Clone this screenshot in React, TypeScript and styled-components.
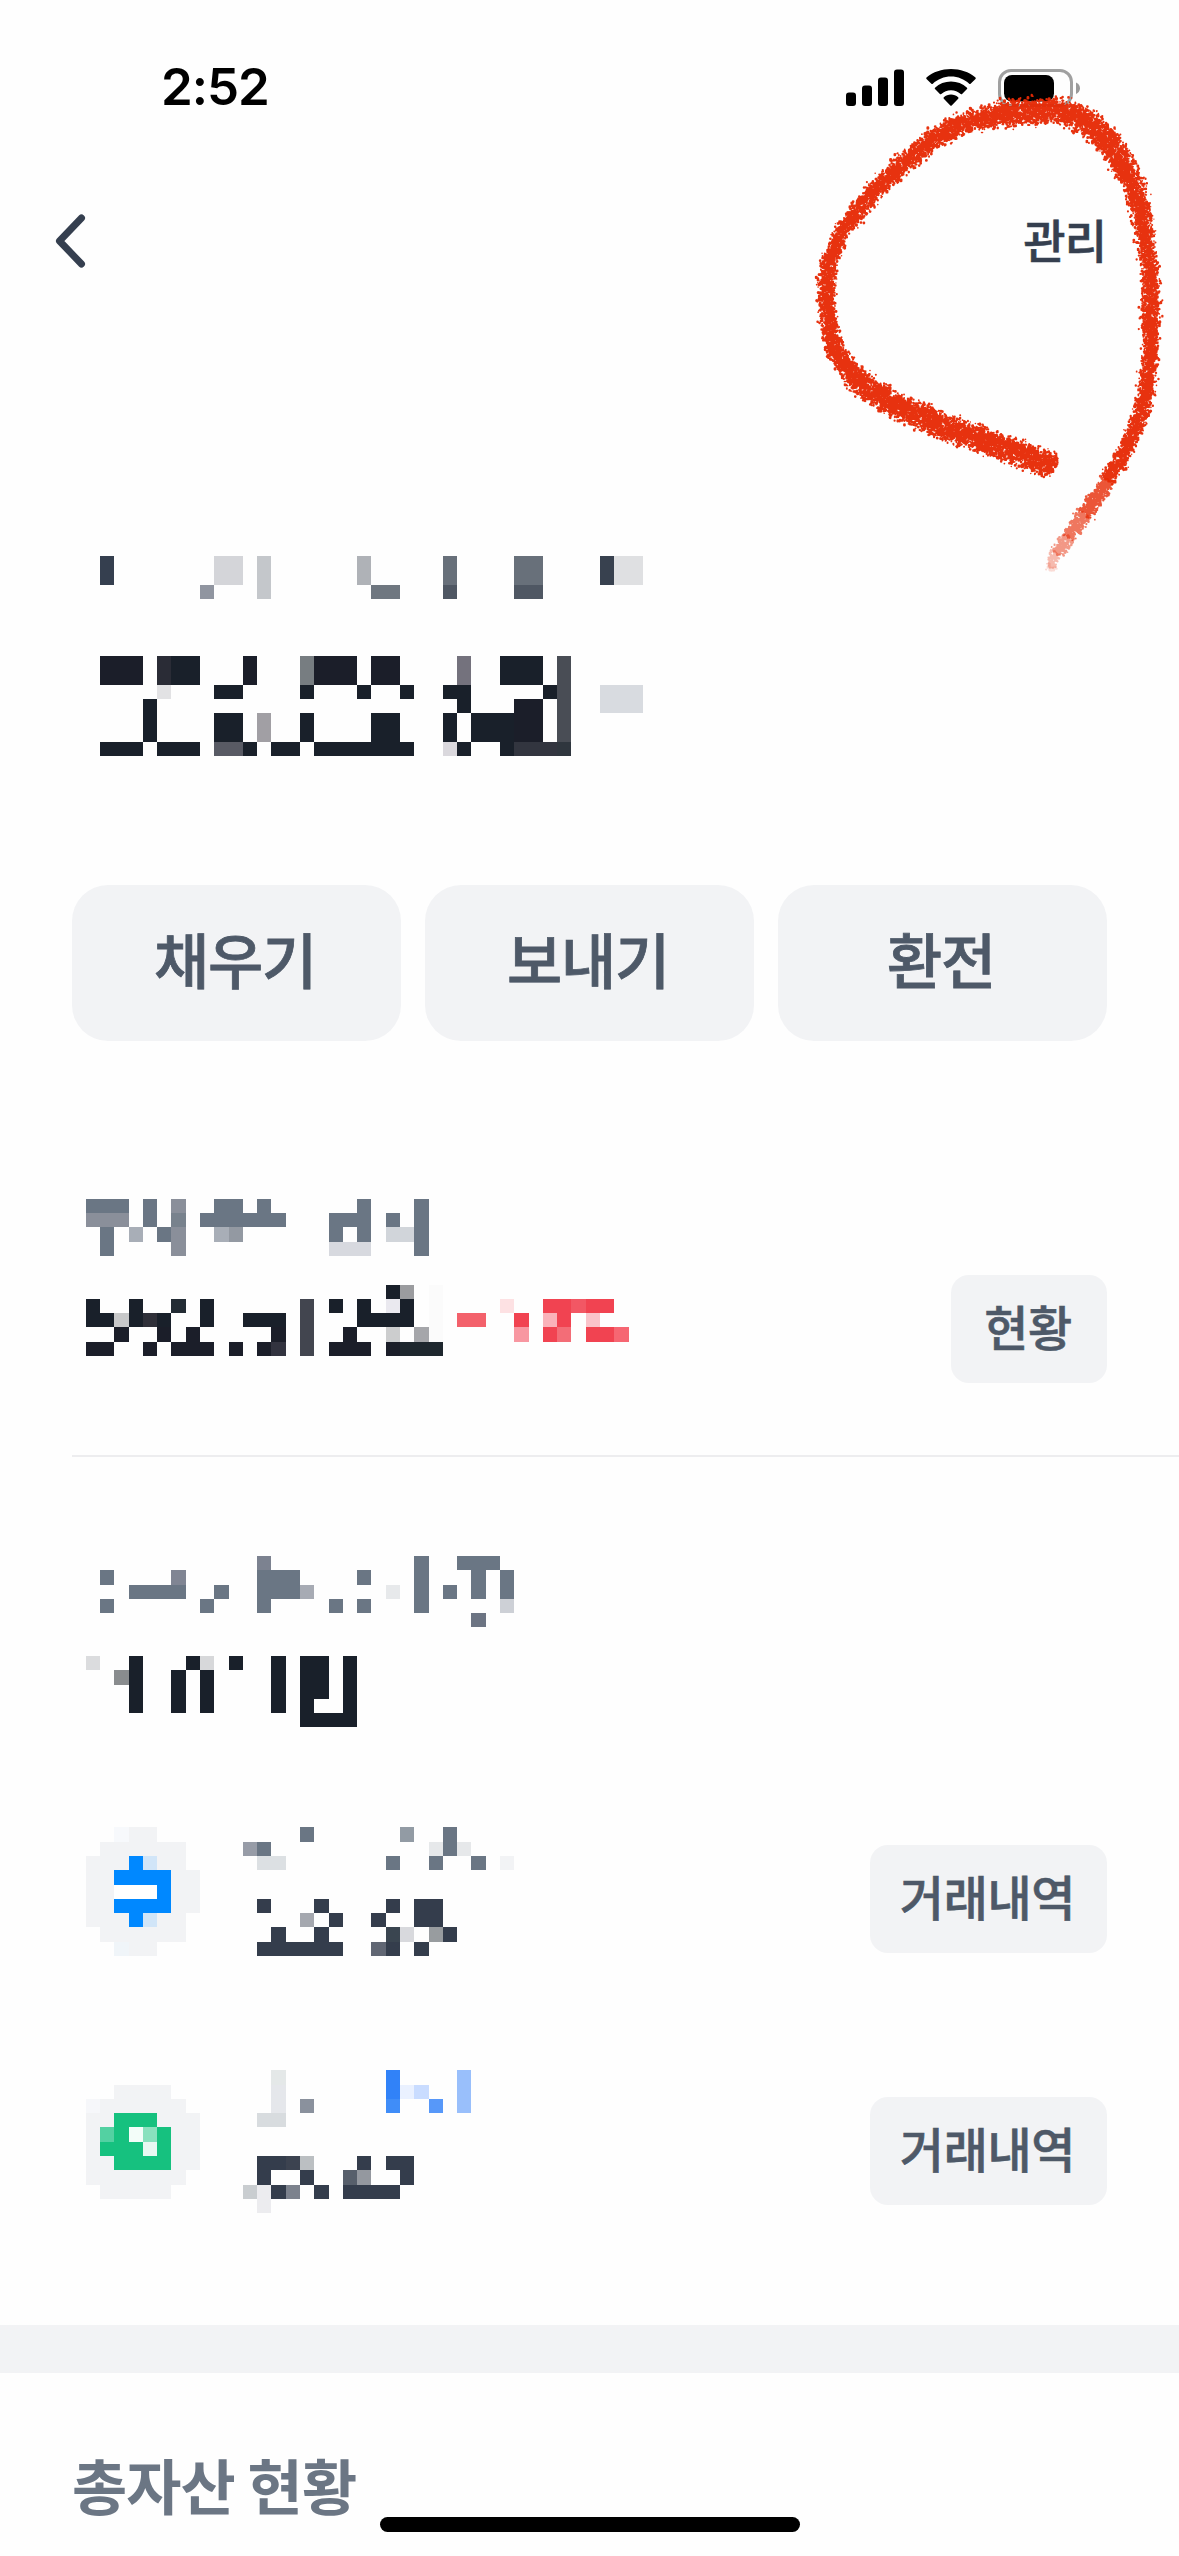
import React from 'react';
import styled, { createGlobalStyle } from 'styled-components';

const GlobalStyle = createGlobalStyle`
  * { box-sizing: border-box; }
  html, body { margin: 0; padding: 0; background: #fefefe; }
  body { font-family: "Noto Sans CJK KR", "Noto Sans", sans-serif; }
`;

const Screen = styled.div`
  position: relative;
  display: flex;
  flex-direction: column;
  width: 1179px;
  height: 2556px;
  overflow: hidden;
  background: #fefefe;
`;

const StatusBar = styled.header`
  display: flex;
  align-items: center;
  justify-content: space-between;
  height: 176px;
  padding: 0 98px 0 161px;
`;

const Clock = styled.time`
  padding-bottom: 3px;
  font-family: Inter, sans-serif;
  font-size: 51px;
  font-weight: 600;
  line-height: 1;
  letter-spacing: -1px;
  color: #000;
`;

const StatusIcons = styled.div`
  display: flex;
  align-items: center;
  gap: 22px;
`;

const NavBar = styled.nav`
  display: flex;
  align-items: center;
  justify-content: space-between;
  height: 129px;
  padding: 0 73px 0 52px;
`;

const BackButton = styled.button`
  display: flex;
  padding: 0;
  border: 0;
  background: none;
`;

const ManageButton = styled.button`
  padding: 0 0 5px;
  border: 0;
  background: none;
  font-family: inherit;
  font-size: 46px;
  font-weight: 500;
  line-height: 1;
  letter-spacing: -1px;
  color: #353f4f;
  -webkit-text-stroke: 0.6px #353f4f;
`;

const Account = styled.section`
  padding: 251px 72px 0 100px;
`;

const Actions = styled.div`
  display: grid;
  grid-template-columns: repeat(3, 1fr);
  gap: 24px;
  margin-top: 129px;
  padding: 0 72px;
`;

const ActionButton = styled.button`
  height: 156px;
  padding: 0 3px 10px 0;
  border: 0;
  border-radius: 36px;
  background: #f2f3f5;
  font-family: inherit;
  font-size: 60px;
  font-weight: 500;
  letter-spacing: -1.2px;
  line-height: 1;
  color: #4e5968;
  -webkit-text-stroke: 0.8px #4e5968;
`;

const Row = styled.div<{ $top: number; $height: number }>`
  display: flex;
  align-items: flex-start;
  justify-content: space-between;
  height: ${(p) => p.$height}px;
  margin-top: ${(p) => p.$top}px;
  padding: 0 72px 0 86px;
`;

const SmallButton = styled.button<{ $width: number; $drop: number }>`
  width: ${(p) => p.$width}px;
  height: 108px;
  margin-top: ${(p) => p.$drop}px;
  padding: 0 2px 9px 0;
  border: 0;
  border-radius: 18px;
  background: #f2f3f5;
  font-family: inherit;
  font-size: 48px;
  font-weight: 500;
  letter-spacing: -0.3px;
  line-height: 1;
  color: #4e5968;
  -webkit-text-stroke: 0.6px #4e5968;
`;

const Divider = styled.hr`
  width: calc(100% - 72px);
  height: 2px;
  margin: 72px 0 0 72px;
  border: 0;
  background: #ededef;
`;

const Band = styled.div`
  height: 48px;
  margin-top: 112px;
  background: #f2f3f5;
`;

const Heading = styled.h2`
  margin: 81px 0 0 72px;
  font-size: 60px;
  font-weight: 700;
  line-height: 60px;
  letter-spacing: -0.9px;
  color: #6b7684;
`;

const HomeIndicator = styled.div`
  position: absolute;
  left: 380px;
  bottom: 24px;
  width: 420px;
  height: 15px;
  border-radius: 8px;
  background: #000;
`;

const Scribble = styled.svg`
  position: absolute;
  top: 80px;
  left: 800px;
  pointer-events: none;
`;

const MosaicSvg = styled.svg`
  display: block;
  flex: none;
`;

/* A run is [row, first column, last column, colour] on the shared privacy grid. */
type Run = [number, number, number, string];

const CELL = 100 / 7;
const colX = (k: number) => Math.round(k * CELL);
const rowY = (k: number) => Math.round(k * CELL - 1.1);

function Mosaic({ runs }: { runs: Run[] }) {
  const x0 = colX(Math.min(...runs.map((r) => r[1])));
  const x1 = colX(Math.max(...runs.map((r) => r[2])) + 1);
  const y0 = rowY(Math.min(...runs.map((r) => r[0])));
  const y1 = rowY(Math.max(...runs.map((r) => r[0])) + 1);
  return (
    <MosaicSvg width={x1 - x0} height={y1 - y0} shapeRendering="crispEdges" aria-hidden="true">
      {runs.map(([r, a, b, fill], i) => (
        <rect
          key={i}
          x={colX(a) - x0}
          y={rowY(r) - y0}
          width={colX(b + 1) - colX(a)}
          height={rowY(r + 1) - rowY(r)}
          fill={fill}
        />
      ))}
    </MosaicSvg>
  );
}

/* Expands "a-b,c" column lists over one or more rows in one colour. */
function cells(rows: number[], cols: string, fill: string): Run[] {
  return rows.flatMap((r) =>
    cols.split(',').map((part): Run => {
      const [a, b] = part.split('-').map(Number);
      return [r, a, b === undefined ? a : b, fill];
    }),
  );
}

const INK = '#19202a';
const INK2 = '#1b1e29';
const SLATE = '#6a7684';
const NAVY = '#343d4c';
const DISC = '#f2f3f5';
const BLUE = '#0088ff';
const GREEN = '#16c17f';
const RED = '#f14351';

const balance: Run[] = [
  ...cells([39, 40], '7', '#353f4f'),
  ...cells([39, 40], '15-16', '#d4d5d9'),
  ...cells([39, 40, 41], '18', '#c4c7cb'),
  ...cells([39, 40], '25', '#afb2b7'),
  ...cells([39, 40], '31,36-37', '#68707a'),
  ...cells([39, 40], '42', '#38414f'),
  ...cells([39, 40], '43-44', '#dfe0e2'),
  ...cells([41], '14', '#9095a0'),
  ...cells([41], '26-27', '#6f7780'),
  ...cells([41], '31,36-37', '#4f5763'),
  ...cells([46, 47], '7-9,17,22-24,26-27', INK2),
  ...cells([46, 47], '11', '#2a2c36'),
  ...cells([46, 47], '12-13,35-37', INK),
  ...cells([46, 47], '21', '#777d81'),
  ...cells([46, 47], '32', '#74727d'),
  ...cells([46, 47, 48, 49, 50, 51], '39', '#494d55'),
  ...cells([48], '11', '#e2e2e4'),
  ...cells([48], '15-16,21,25,28,31-32,38', INK),
  ...cells([48, 49], '42-44', '#d8dbe0'),
  ...cells([49], '10,32', INK),
  ...cells([49], '36-37', INK2),
  ...cells([50, 51], '10,15-16,21,26-27,31,33-35', INK),
  ...cells([50, 51], '36-37', INK2),
  ...cells([50, 51], '18', '#a19fa4'),
  ...cells([52], '7-9,11-13,17,19-20,22-28,32,35', INK),
  ...cells([52], '15-16', '#585a64'),
  ...cells([52], '31', '#dad8dd'),
  ...cells([52], '36-38', '#32353f'),
  ...cells([52], '39', '#2f363e'),
];

const holding: Run[] = [
  ...cells([84], '6-8,10,15-16,18,25,29', SLATE),
  ...cells([84, 86, 87], '12', '#8a8f9a'),
  ...cells([85], '6-8', '#8a8f9a'),
  ...cells([85], '12', '#78828d'),
  ...cells([85], '10,14-19,23-25,27,29', SLATE),
  ...cells([86], '7,11,23,25,29', SLATE),
  ...cells([86], '9,15', '#a8aeb7'),
  ...cells([86], '16', '#9399a2'),
  ...cells([86], '27-28', '#d1d5da'),
  ...cells([87], '7,29', SLATE),
  ...cells([87], '23-25', '#d7d9df'),
  ...cells([90], '27', INK),
  ...cells([90], '28', '#9b9c9f'),
  ...cells([90, 91, 92, 93], '30', '#fbfbfb'),
  ...cells([91], '6,9,14,23,25,28', INK),
  ...cells([91], '12', '#232c34'),
  ...cells([91, 92, 93, 94], '21', '#42454f'),
  ...cells([91], '27', '#eae9ef'),
  ...cells([91], '35', '#fde1e3'),
  ...cells([91], '38-39,41-42', RED),
  ...cells([91], '40', '#f25764'),
  ...cells([92], '6-7,9,11,14,17-19,25-28', INK),
  ...cells([92], '8', '#c7c8c9'),
  ...cells([92], '10', '#2f3039'),
  ...cells([92], '32-33', '#f3616b'),
  ...cells([92], '36,39', RED),
  ...cells([92], '38', '#fab2b9'),
  ...cells([92], '41', '#fac3ca'),
  ...cells([93], '8,11,13,19,24', INK2),
  ...cells([93], '27', '#cccdce'),
  ...cells([93], '29', '#a5a6aa'),
  ...cells([93], '36', '#f897a1'),
  ...cells([93], '38,41-42', RED),
  ...cells([93], '39', '#f36d77'),
  ...cells([93], '43', '#f66672'),
  ...cells([94], '6-7,10,12-14,16,18,23-25,27', INK2),
  ...cells([94], '19', '#32333f'),
  ...cells([94], '28-30', '#1e272e'),
];

const deposit: Run[] = [
  ...cells([109], '18', '#7c8290'),
  ...cells([109], '29,32-34', SLATE),
  ...cells([110], '7,18-20,25,29,33,35', SLATE),
  ...cells([110], '12', '#808593'),
  ...cells([111], '9-12,15,18-20,29,31,33,35', SLATE),
  ...cells([111], '21', '#a7abb4'),
  ...cells([111], '27', '#e7e9eb'),
  ...cells([112], '7,14,18,23,25,29', SLATE),
  ...cells([112], '35', '#cdd0d6'),
  ...cells([113], '33', '#6c7483'),
  ...cells([116], '6', '#dbdcde'),
  ...cells([116], '9,13,16,19,21-22,24', INK),
  ...cells([116], '14', '#d7d8da'),
  ...cells([117], '8', '#898c8e'),
  ...cells([117, 118], '9,12,14,19,21-22,24', INK),
  ...cells([119], '9,12,14,19,21,24', INK),
  ...cells([120], '21-24', INK),
];

const dollars: Run[] = [
  ...cells([128], '8', '#f7f9fc'),
  ...cells([128], '9-10', DISC),
  ...cells([128], '21,31', SLATE),
  ...cells([128], '28', '#929ba4'),
  ...cells([129], '7-12', DISC),
  ...cells([129], '17', '#979ca7'),
  ...cells([129], '18,31', SLATE),
  ...cells([129], '30,32', '#e6e8ea'),
  ...cells([130], '6-8,11-12,35', DISC),
  ...cells([130, 134], '9', BLUE),
  ...cells([130, 134], '10', '#d1e5f8'),
  ...cells([130], '18-19', '#dce0e3'),
  ...cells([130], '27,30,33', SLATE),
  ...cells([131, 132, 133], '6-7,12-13', DISC),
  ...cells([131, 133], '8-11', BLUE),
  ...cells([132], '8-10', '#ffffff'),
  ...cells([132], '11', BLUE),
  ...cells([133], '18,22,27,29-30', NAVY),
  ...cells([134], '6-8,11-12', DISC),
  ...cells([134], '21', '#a5a8af'),
  ...cells([134], '23,26,29-30', NAVY),
  ...cells([135], '7-12', DISC),
  ...cells([135], '19,22,31', NAVY),
  ...cells([135], '27', '#3a4550'),
  ...cells([135], '28', '#d8d9dd'),
  ...cells([135], '30', '#989c9f'),
  ...cells([136], '8', '#f0f5f9'),
  ...cells([136], '9-10', DISC),
  ...cells([136], '18-23,27,29', NAVY),
  ...cells([136], '26', '#606673'),
];

const shares: Run[] = [
  ...cells([145], '19', '#e4e8e8'),
  ...cells([145, 146], '27', '#3182f8'),
  ...cells([145, 146, 147], '32', '#99bffb'),
  ...cells([146], '8-11', DISC),
  ...cells([146, 147], '19', '#e5e7eb'),
  ...cells([146], '28', '#eaf1ff'),
  ...cells([146], '29', '#c9dcff'),
  ...cells([147], '6', '#f6f7fa'),
  ...cells([147], '7-12', DISC),
  ...cells([147], '21', '#8a919d'),
  ...cells([147], '27', '#408df8'),
  ...cells([147], '30', '#5798f9'),
  ...cells([148], '6-7,11-13', DISC),
  ...cells([148], '8-10', GREEN),
  ...cells([148], '18-19', '#d8dcdf'),
  ...cells([149], '6,12-13', DISC),
  ...cells([149], '7', '#53d1a2'),
  ...cells([149], '8,11', GREEN),
  ...cells([149], '9', '#f3fdf9'),
  ...cells([149], '10', '#89e1be'),
  ...cells([150], '6,12-13', DISC),
  ...cells([150], '7-9,11', GREEN),
  ...cells([150], '10', '#e8f8f2'),
  ...cells([151], '6-7,12-13', DISC),
  ...cells([151], '8-11', GREEN),
  ...cells([151], '18-19,25,27-28', NAVY),
  ...cells([151], '20', '#3c4350'),
  ...cells([151], '21', '#bbbfc2'),
  ...cells([152], '6-12', DISC),
  ...cells([152], '18,21,28', NAVY),
  ...cells([152], '24', '#575f6b'),
  ...cells([152], '25', '#94989f'),
  ...cells([153], '7-11', DISC),
  ...cells([153], '17', '#c9cdd0'),
  ...cells([153, 154], '18', '#ececef'),
  ...cells([153], '19,22,24-27', NAVY),
  ...cells([153], '20', '#7c828d'),
];

/* Crayon stroke: centre x, centre y, width, strength. */
type Knot = [number, number, number, number];
const knots: Knot[] = [
  [1055, 467, 26, 1], [1027, 456, 27, 1], [993, 444, 27, 1], [960, 433, 28, 1],
  [923, 418, 27, 1], [890, 402, 26, 1], [863, 385, 25, 1], [845, 366, 22, 1],
  [833, 342, 20, 1], [827, 311, 18, 1], [827, 279, 18, 1], [833, 251, 18, 1],
  [846, 226, 17, 1], [864, 203, 19, 1], [890, 175, 20, 1], [923, 147, 21, 1],
  [957, 127, 23, 1], [987, 117, 23, 1], [1013, 112, 26, 1], [1043, 111, 27, 1],
  [1067, 113, 27, 1], [1090, 123, 27, 1], [1108, 143, 27, 1], [1124, 166, 26, 1],
  [1136, 193, 22, 1], [1143, 225, 20, 1], [1148, 258, 18, 1], [1151, 290, 19, 1],
  [1150, 326, 18, 1], [1150, 354, 18, 1], [1147, 383, 17, 1], [1140, 415, 17, 1],
  [1130, 440, 17, 1], [1115, 469, 16, 0.95], [1097, 497, 16, 0.85], [1080, 521, 16, 0.7],
  [1066, 541, 15, 0.55], [1054, 558, 12, 0.35], [1050, 570, 8, 0.2],
];

function catmull(a: number, b: number, c: number, d: number, t: number) {
  return 0.5 * (2 * b + (c - a) * t + (2 * a - 5 * b + 4 * c - d) * t * t + (3 * b - a - 3 * c + d) * t * t * t);
}

function buildCrayon() {
  let seed = 20417;
  const rnd = () => {
    seed = (seed * 1664525 + 1013904223) % 4294967296;
    return seed / 4294967296;
  };
  const layers = new Map<number, string[]>();
  for (let i = 0; i < knots.length - 1; i++) {
    const p0 = knots[Math.max(0, i - 1)];
    const p1 = knots[i];
    const p2 = knots[i + 1];
    const p3 = knots[Math.min(knots.length - 1, i + 2)];
    const at = (t: number) => [0, 1, 2, 3].map((n) => catmull(p0[n], p1[n], p2[n], p3[n], t));
    const steps = 10;
    for (let s = 0; s < steps; s++) {
      const a = at(s / steps);
      const b = at((s + 1) / steps);
      const dx = b[0] - a[0];
      const dy = b[1] - a[1];
      const len = Math.hypot(dx, dy) || 1;
      const level = Math.max(1, Math.round(a[3] * 6));
      const list = layers.get(level) || [];
      const count = Math.round(len * a[2] * 0.62);
      const wobble = (rnd() - 0.5) * 3;
      for (let n = 0; n < count; n++) {
        const off = wobble + (rnd() + rnd() - 1) * a[2] * 0.3 + (rnd() - 0.5) * a[2] * 0.66;
        const t = rnd();
        const r = 0.7 + rnd() * 0.8;
        const x = a[0] + dx * t - (dy / len) * off + (rnd() - 0.5) * 3;
        const y = a[1] + dy * t + (dx / len) * off + (rnd() - 0.5) * 3;
        list.push(`M${(x - r).toFixed(1)} ${y.toFixed(1)}a${r.toFixed(1)} ${r.toFixed(1)} 0 1 0 ${(2 * r).toFixed(1)} 0a${r.toFixed(1)} ${r.toFixed(1)} 0 1 0 ${(-2 * r).toFixed(1)} 0`);
      }
      layers.set(level, list);
    }
  }
  return [...layers.entries()];
}

const crayon = buildCrayon();

function CrayonLoop() {
  return (
    <Scribble width="379" height="520" viewBox="800 80 379 520" aria-hidden="true">
      {crayon.map(([level, d]) => (
        <path key={level} d={d.join('')} fill="#e62a05" fillRule="nonzero" opacity={(level / 6) * 0.96} />
      ))}
    </Scribble>
  );
}

function Signal() {
  return (
    <svg width="58" height="38" viewBox="0 0 58 38">
      <rect x="0" y="23.5" width="10" height="13.5" rx="3" />
      <rect x="16" y="16.5" width="10" height="20.5" rx="3" />
      <rect x="32" y="8.5" width="10" height="28.5" rx="3" />
      <rect x="48" y="0.5" width="10" height="36.5" rx="3" />
    </svg>
  );
}

function Wifi() {
  return (
    <svg width="50" height="38" viewBox="0 0 50 38">
      <path d="M25 7.6c6.9 0 13.3 2.6 18.2 7.2.4.4 1 .4 1.4 0l4.9-4.9c.4-.4.4-1 0-1.4C42.9 2.9 34.2 0 25 0S7.1 2.9.5 8.5c-.4.4-.4 1 0 1.4l4.900 4.900c.4.4 1 .4 1.400 0C11.700 10.200 18.100 7.600 25 7.600z" />
      <path d="M25 21.200c3.700 0 7.100 1.400 9.700 3.700.4.4 1 .4 1.400 0l4.900-4.800c.4-.4.4-1 0-1.400-4.300-4-9.900-6.200-16-6.200s-11.700 2.200-16 6.200c-.4.4-.4 1 0 1.400l4.900 4.800c.4.4 1 .4 1.400 0 2.600-2.300 6-3.700 9.700-3.700z" />
      <path d="M32.200 29.700c.4-.4.4-1 0-1.400C30.200 26.600 27.700 25.600 25 25.600s-5.200 1-7.200 2.700c-.4.4-.4 1 0 1.400l6.500 6.700c.4.4 1 .4 1.400 0z" />
    </svg>
  );
}

function Battery() {
  return (
    <svg width="83" height="38" viewBox="0 0 83 38">
      <rect x="1.5" y="1.5" width="72" height="35" rx="11.5" fill="none" stroke="#a0a0a0" strokeWidth="3" />
      <rect x="6" y="6" width="50" height="26.5" rx="8" />
      <path d="M78 13.500c2.500 1 4 3.200 4 5.700s-1.500 4.700-4 5.700z" fill="#9a9a9a" />
    </svg>
  );
}

export default function App() {
  return (
    <>
      <GlobalStyle />
      <Screen>
        <StatusBar>
          <Clock>2:52</Clock>
          <StatusIcons>
            <Signal />
            <Wifi />
            <Battery />
          </StatusIcons>
        </StatusBar>
        <NavBar>
          <BackButton aria-label="뒤로">
            <svg width="36" height="60" viewBox="0 0 36 60">
              <path d="M29.5 7L7.5 30l22 23" fill="none" stroke="#353f4f" strokeWidth="7" strokeLinecap="round" strokeLinejoin="round" />
            </svg>
          </BackButton>
          <ManageButton>관리</ManageButton>
        </NavBar>
        <Account>
          <Mosaic runs={balance} />
        </Account>
        <Actions>
          <ActionButton>채우기</ActionButton>
          <ActionButton>보내기</ActionButton>
          <ActionButton>환전</ActionButton>
        </Actions>
        <Row $top={158} $height={184}>
          <Mosaic runs={holding} />
          <SmallButton $width={156} $drop={76}>현황</SmallButton>
        </Row>
        <Divider />
        <Row $top={99} $height={171}>
          <Mosaic runs={deposit} />
        </Row>
        <Row $top={100} $height={129}>
          <Mosaic runs={dollars} />
          <SmallButton $width={237} $drop={18}>거래내역</SmallButton>
        </Row>
        <Row $top={114} $height={143}>
          <Mosaic runs={shares} />
          <SmallButton $width={237} $drop={27}>거래내역</SmallButton>
        </Row>
        <Band />
        <Heading>총자산 현황</Heading>
        <HomeIndicator />
        <CrayonLoop />
      </Screen>
    </>
  );
}
